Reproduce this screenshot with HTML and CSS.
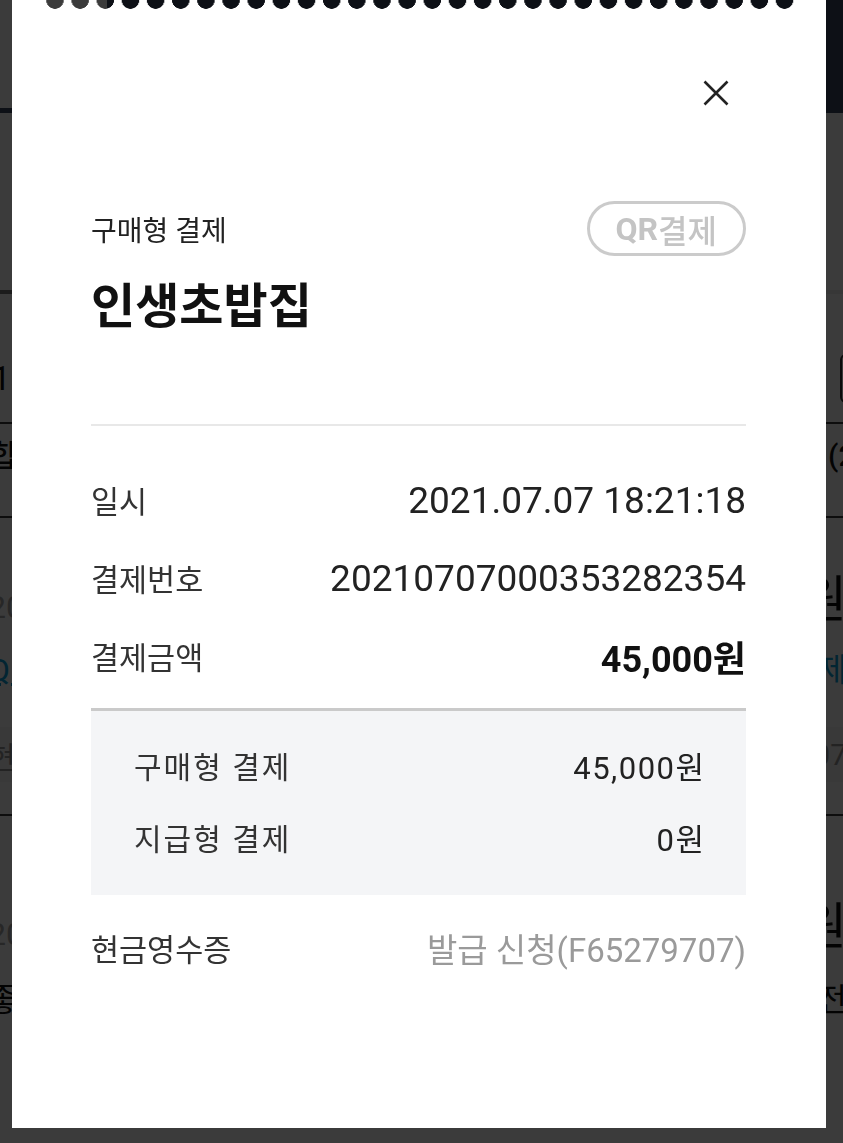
FILE: index.html
```html
<!DOCTYPE html>
<html lang="ko">
<head>
    <meta charset="UTF-8">
    <meta name="viewport" content="width=device-width, initial-scale=1.0">
    <title>결제 상세</title>
    <link rel="stylesheet" href="styles.css">
</head>
<body>
    <div class="page">
        <div class="page-inner">
            <header class="page-header">
                <div class="header-tab"></div>
                <div class="header-fill"></div>
            </header>
            <div class="page-blank"></div>
            <div class="tabs"><span class="tab-active"></span></div>
            <div class="filter">
                <span class="filter-period">1개월</span>
                <span class="filter-box"></span>
            </div>
            <div class="summary">
                <span class="summary-label">합계</span>
                <span class="summary-count">(2건)</span>
            </div>
            <ul class="history">
                <li class="entry">
                    <div class="entry-head">
                        <span class="entry-date">2021</span>
                        <span class="entry-amount">0원</span>
                    </div>
                    <div class="entry-link">
                        <span class="link-left">QR</span>
                        <span>결제</span>
                    </div>
                    <div class="entry-band">
                        <span>현금</span>
                        <span>707</span>
                    </div>
                </li>
                <li class="entry">
                    <div class="entry-head">
                        <span class="entry-date">2021</span>
                        <span class="entry-amount">0원</span>
                    </div>
                    <div class="entry-sub">
                        <span>좋은</span>
                        <span>취소 전</span>
                    </div>
                </li>
            </ul>
        </div>
    </div>

    <div class="dim"></div>

    <div class="modal">
        <div class="receipt">
            <div class="receipt-close-row">
                <button class="receipt-close" type="button" aria-label="닫기">
                    <svg width="26" height="26" viewBox="0 0 26 26">
                        <path d="M1.5 1.5 L24.5 24.5 M24.5 1.5 L1.5 24.5" stroke="#222" stroke-width="2.6" fill="none"/>
                    </svg>
                </button>
            </div>

            <div class="receipt-head">
                <span class="receipt-type">구매형 결제</span>
                <span class="qr-badge"><b>QR</b>결제</span>
            </div>
            <h1 class="receipt-title">인생초밥집</h1>

            <div class="receipt-divider"></div>

            <div class="receipt-rows">
                <div class="receipt-row">
                    <span class="row-label">일시</span>
                    <span class="row-value">2021.07.07 18:21:18</span>
                </div>
                <div class="receipt-row">
                    <span class="row-label">결제번호</span>
                    <span class="row-value">20210707000353282354</span>
                </div>
                <div class="receipt-row">
                    <span class="row-label">결제금액</span>
                    <span class="row-value total">45,000원</span>
                </div>
            </div>

            <div class="breakdown">
                <div class="receipt-row">
                    <span class="breakdown-label">구매형 결제</span>
                    <span class="breakdown-value">45,000원</span>
                </div>
                <div class="receipt-row">
                    <span class="breakdown-label">지급형 결제</span>
                    <span class="breakdown-value">0원</span>
                </div>
            </div>

            <div class="receipt-row cash-row">
                <span class="row-label">현금영수증</span>
                <span class="cash-value">발급 신청(F65279707)</span>
            </div>
        </div>
    </div>
</body>
</html>
```

FILE: styles.css
```css
* {
    box-sizing: border-box;
}
html, body {
    margin: 0;
    height: 100%;
}
body {
    font-family: Roboto, "Noto Sans CJK KR", sans-serif;
    background: #fff;
    color: #222;
    overflow: hidden;
}

/* page behind the popup */
.page {
    height: 100%;
    overflow: hidden;
}
.page-inner {
    margin: 0 -4px 0 -12px;
}
.page-header {
    display: flex;
    height: 113px;
}
.header-tab {
    width: 119px;
    border-bottom: 5px solid #3b4761;
}
.header-fill {
    flex: 1;
    background: #3b4761;
}
.page-blank {
    height: 177px;
}
.tabs {
    display: flex;
    height: 4px;
    background: #ececec;
}
.tab-active {
    width: 50%;
    background: #7a7a7a;
}
.filter {
    display: flex;
    align-items: flex-start;
    height: 128px;
    padding-top: 60px;
}
.filter-period {
    flex-shrink: 0;
    width: 852px;
    padding-left: 4px;
    font-size: 33px;
    line-height: 49px;
    color: #111;
}
.filter-box {
    flex-shrink: 0;
    width: 120px;
    height: 49px;
    border: 2px solid #333;
    border-radius: 6px;
}
.summary {
    display: flex;
    height: 96px;
    padding-top: 14px;
    border-top: 2px solid #3a3a3a;
    border-bottom: 2px solid #3a3a3a;
    font-size: 30px;
    line-height: 36px;
    font-weight: 500;
    color: #111;
}
.summary-label {
    flex-shrink: 0;
    width: 840px;
    padding-left: 2px;
}
.summary-count {
    flex-shrink: 0;
}
.history {
    list-style: none;
    margin: 0;
    padding: 0;
}
.entry {
    border-bottom: 2px solid #3a3a3a;
    padding: 55px 0 32px;
}
.entry:last-child {
    border-bottom: 0;
    padding-bottom: 100px;
}
.entry + .entry {
    padding-top: 84px;
}
.entry-head {
    display: flex;
    justify-content: space-between;
    align-items: flex-end;
    height: 54px;
}
.entry-date {
    font-size: 32px;
    line-height: 40px;
    color: #aaa;
}
.entry-amount {
    font-size: 50px;
    line-height: 54px;
    color: #111;
}
.entry-link {
    display: flex;
    justify-content: space-between;
    margin-top: 22px;
    font-size: 32px;
    line-height: 42px;
    color: #0a9fd8;
}
.link-left {
    text-decoration: underline;
}
.entry-band {
    display: flex;
    justify-content: space-between;
    align-items: center;
    margin-top: 36px;
    height: 55px;
    background: #f6f6f6;
    font-size: 30px;
    color: #999;
}
.entry-sub {
    display: flex;
    justify-content: space-between;
    margin-top: 24px;
    font-size: 32px;
    line-height: 44px;
    color: #111;
}

.dim {
    position: fixed;
    inset: 0;
    background: rgba(0, 0, 0, 0.77);
}

/* receipt popup */
.modal {
    position: fixed;
    inset: 0;
    display: flex;
    padding: 0 17px 15px 12px;
}
.receipt {
    flex: 1;
    display: flex;
    flex-direction: column;
    padding: 0 80px 0 79px;
    background: #fff;
    -webkit-mask:
        radial-gradient(circle at 50% 0, transparent 8.5px, #000 9px) 30.4px 0 / 25.17px 10px repeat-x,
        linear-gradient(#000, #000) 0 10px / 100% 100% no-repeat,
        linear-gradient(to right, #000 34px, transparent 34px, transparent 782px, #000 782px) 0 0 / 100% 10px no-repeat;
    mask:
        radial-gradient(circle at 50% 0, transparent 8.5px, #000 9px) 30.4px 0 / 25.17px 10px repeat-x,
        linear-gradient(#000, #000) 0 10px / 100% 100% no-repeat,
        linear-gradient(to right, #000 34px, transparent 34px, transparent 782px, #000 782px) 0 0 / 100% 10px no-repeat;
}
.receipt-close-row {
    display: flex;
    justify-content: flex-end;
    padding-top: 71px;
}
.receipt-close {
    width: 44px;
    height: 44px;
    margin-right: 8px;
    padding: 0;
    border: 0;
    background: none;
    display: flex;
    align-items: center;
    justify-content: center;
}
.receipt-head {
    display: flex;
    justify-content: space-between;
    align-items: center;
    margin-top: 86px;
}
.receipt-type {
    font-size: 28px;
    color: #222;
}
.qr-badge {
    display: flex;
    align-items: center;
    height: 55px;
    padding: 0 26px;
    border: 3px solid #cbcbcb;
    border-radius: 28px;
    font-size: 32px;
    font-weight: 500;
    color: #c4c4c4;
}
.qr-badge b {
    font-weight: 700;
}
.receipt-title {
    margin: 21px 0 0;
    font-size: 48px;
    line-height: 60px;
    font-weight: 700;
    color: #111;
}
.receipt-divider {
    height: 2px;
    margin-top: 87px;
    background: #e8e8e8;
}
.receipt-rows {
    margin-top: 35px;
}
.receipt-row {
    display: flex;
    justify-content: space-between;
    align-items: center;
    height: 78px;
}
.row-label {
    font-size: 30.5px;
    color: #333;
}
.row-value {
    font-size: 37px;
    color: #222;
}
.row-value.total {
    font-size: 36px;
    font-weight: 700;
    color: #111;
}
.breakdown {
    margin-top: 13px;
    padding: 18px 42px 22px 43px;
    border-top: 3px solid #cacaca;
    background: #f4f5f7;
}
.breakdown .receipt-row {
    height: 72px;
}
.breakdown-label {
    font-size: 30px;
    letter-spacing: 2px;
    color: #333;
}
.breakdown-value {
    font-size: 31px;
    letter-spacing: 1.5px;
    margin-right: -1.5px;
    color: #222;
}
.cash-row {
    margin-top: 14px;
}
.cash-value {
    font-size: 33px;
    color: #9a9a9a;
}
```
